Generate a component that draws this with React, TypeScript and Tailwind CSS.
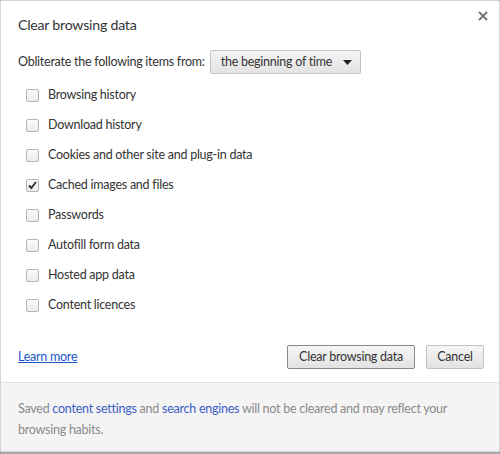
import { useState } from "react";

const items = [
  { label: "Browsing history", checked: false },
  { label: "Download history", checked: false },
  { label: "Cookies and other site and plug-in data", checked: false },
  { label: "Cached images and files", checked: true },
  { label: "Passwords", checked: false },
  { label: "Autofill form data", checked: false },
  { label: "Hosted app data", checked: false },
  { label: "Content licences", checked: false },
];

function Checkbox({ checked, onClick }: { checked: boolean; onClick: () => void }) {
  return (
    <button
      onClick={onClick}
      className="w-[13px] h-[13px] rounded-[2px] border border-[#b4b4b4] bg-gradient-to-b from-[#fafafa] to-[#ececec] flex items-center justify-center shrink-0"
    >
      {checked && (
        <svg width="11" height="11" viewBox="0 0 11 11">
          <path d="M2 5.5 L4.3 8 L9 2" stroke="#333" strokeWidth="2" fill="none" />
        </svg>
      )}
    </button>
  );
}

export default function App() {
  const [state, setState] = useState(items.map((i) => i.checked));

  return (
    <div className="w-[500px] h-[454px] bg-[#a8a8a8] font-['Lato','Liberation_Sans',sans-serif] text-[12.5px] tracking-[-0.25px] text-[#333]">
      <div className="h-[452px] bg-white border border-[#d6d6d6] rounded-[2px] flex flex-col overflow-hidden">
        <div className="flex items-start justify-between pl-[17px] pr-[10px] pt-[14px]">
          <h1 className="text-[14.2px] leading-[20px] text-[#333]">Clear browsing data</h1>
          <svg width="10" height="10" viewBox="0 0 10 10" className="mt-[-4px] mr-[1px]">
            <path d="M1 1 L9 9 M9 1 L1 9" stroke="#777" strokeWidth="2" />
          </svg>
        </div>

        <div className="flex items-center gap-[5px] pl-[17px] mt-[15px]">
          <span>Obliterate the following items from:</span>
          <div className="h-[24px] w-[151px] flex items-center justify-between pl-[10px] pr-[8px] border border-[#c3c3c3] rounded-[2px] bg-gradient-to-b from-[#f4f4f4] to-[#e4e4e4]">
            <span>the beginning of time</span>
            <svg width="9" height="5" viewBox="0 0 9 5">
              <path d="M0 0 H9 L4.5 5 Z" fill="#222" />
            </svg>
          </div>
        </div>

        <div className="flex flex-col pl-[25px] mt-[6px]">
          {items.map((item, i) => (
            <label key={item.label} className="h-[30px] flex items-center gap-[9px]">
              <Checkbox
                checked={state[i]}
                onClick={() => setState(state.map((v, j) => (j === i ? !v : v)))}
              />
              <span>{item.label}</span>
            </label>
          ))}
        </div>

        <div className="flex items-center justify-between pl-[17px] pr-[15px] mt-[25px]">
          <a href="#" className="text-[#1a55c8] underline">Learn more</a>
          <div className="flex gap-[11px]">
            <button className="h-[24px] w-[128px] border border-[#8a8a8a] rounded-[2px] bg-gradient-to-b from-[#f6f6f6] to-[#e2e2e2] text-[#333]">
              Clear browsing data
            </button>
            <button className="h-[24px] w-[58px] border border-[#c3c3c3] rounded-[2px] bg-gradient-to-b from-[#f6f6f6] to-[#e2e2e2] text-[#333]">
              Cancel
            </button>
          </div>
        </div>

        <div className="flex-1 mt-[13px] bg-[#f4f4f4] border-t border-[#e3e3e3] pl-[17px] pr-[20px] pt-[15px] leading-[21px] text-[#8a8a8a]">
          Saved <a href="#" className="text-[#3b5ec4]">content settings</a> and{" "}
          <a href="#" className="text-[#3b5ec4]">search engines</a> will not be cleared and may reflect your
          browsing habits.
        </div>
      </div>
    </div>
  );
}
